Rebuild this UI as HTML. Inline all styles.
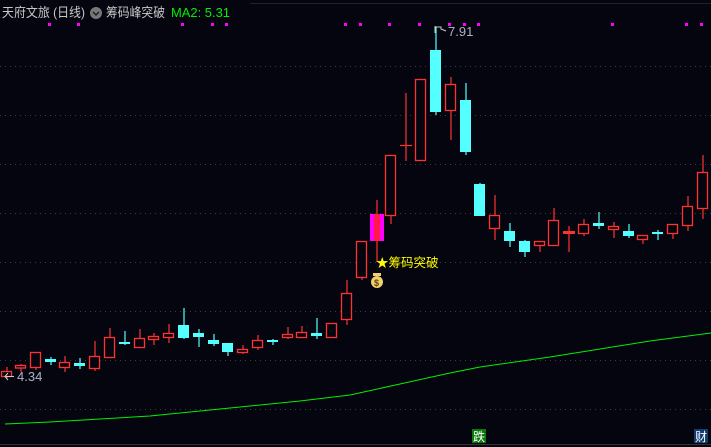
<!DOCTYPE html>
<html><head><meta charset="utf-8"><style>
html,body{margin:0;padding:0;background:#05050f;width:711px;height:447px;overflow:hidden}
svg{display:block}
text{font-family:"Liberation Sans","Noto Sans CJK SC",sans-serif}
</style></head><body>
<svg width="711" height="447" viewBox="0 0 711 447" xmlns="http://www.w3.org/2000/svg">
<rect width="711" height="447" fill="#05050f"/>
<g stroke="#3c3c3c" stroke-dasharray="1 4" stroke-width="1">
<line x1="0" y1="66.5" x2="711" y2="66.5"/><line x1="0" y1="115.5" x2="711" y2="115.5"/>
<line x1="0" y1="164.5" x2="711" y2="164.5"/><line x1="0" y1="213.5" x2="711" y2="213.5"/>
<line x1="0" y1="262.5" x2="711" y2="262.5"/><line x1="0" y1="311.5" x2="711" y2="311.5"/>
<line x1="0" y1="360.5" x2="711" y2="360.5"/><line x1="0" y1="409.5" x2="711" y2="409.5"/>
</g>
<line x1="250" y1="3.5" x2="711" y2="3.5" stroke="#222"/>
<line x1="0" y1="444.5" x2="711" y2="444.5" stroke="#333"/>
<g fill="#ff00ff">
<rect x="48" y="23" width="3" height="3"/><rect x="77" y="23" width="3" height="3"/><rect x="181" y="23" width="3" height="3"/><rect x="211" y="23" width="3" height="3"/><rect x="225" y="23" width="3" height="3"/>
<rect x="344" y="23" width="3" height="3"/><rect x="359" y="23" width="3" height="3"/><rect x="388" y="23" width="3" height="3"/><rect x="418" y="23" width="3" height="3"/><rect x="448" y="23" width="3" height="3"/><rect x="463" y="23" width="3" height="3"/><rect x="477" y="23" width="3" height="3"/>
<rect x="611" y="23" width="3" height="3"/><rect x="685" y="23" width="3" height="3"/><rect x="700" y="23" width="3" height="3"/>
</g>
<polyline fill="none" stroke="#00f000" stroke-width="1" points="5,424 50,422 100,419 150,416 200,411 250,406 300,401 350,395 400,384 450,373 480,367 550,357 600,349 650,341 711,333"/>
<g stroke-width="1.2">
<g stroke="#ff3232">
<line x1="7" y1="367" x2="7" y2="378"/><line x1="21" y1="364" x2="21" y2="372"/><line x1="36" y1="352" x2="36" y2="370"/>
<line x1="65" y1="356" x2="65" y2="372"/><line x1="95" y1="341" x2="95" y2="371"/><line x1="110" y1="328" x2="110" y2="357"/>
<line x1="140" y1="329" x2="140" y2="348"/><line x1="154" y1="333" x2="154" y2="345"/><line x1="169" y1="324" x2="169" y2="343"/>
<line x1="243" y1="345" x2="243" y2="354"/><line x1="258" y1="335" x2="258" y2="350"/><line x1="288" y1="327" x2="288" y2="339"/>
<line x1="302" y1="326" x2="302" y2="338"/><line x1="347" y1="280" x2="347" y2="325"/><line x1="362" y1="241" x2="362" y2="280"/>
<line x1="377" y1="200" x2="377" y2="262"/><line x1="391" y1="155" x2="391" y2="224"/><line x1="406" y1="93" x2="406" y2="161"/>
<line x1="451" y1="77" x2="451" y2="140"/><line x1="495" y1="195" x2="495" y2="240"/><line x1="540" y1="241" x2="540" y2="252"/>
<line x1="554" y1="208" x2="554" y2="246"/><line x1="569" y1="226" x2="569" y2="252"/><line x1="584" y1="219" x2="584" y2="236"/>
<line x1="614" y1="222" x2="614" y2="238"/><line x1="643" y1="235" x2="643" y2="244"/><line x1="673" y1="224" x2="673" y2="239"/>
<line x1="688" y1="196" x2="688" y2="231"/><line x1="703" y1="155" x2="703" y2="219"/>
<line x1="400" y1="145.5" x2="412" y2="145.5"/>
</g>
<g stroke="#54ffff">
<line x1="51" y1="357" x2="51" y2="365"/><line x1="80" y1="358" x2="80" y2="369"/><line x1="125" y1="331" x2="125" y2="345"/>
<line x1="184" y1="308" x2="184" y2="339"/><line x1="199" y1="329" x2="199" y2="347"/><line x1="214" y1="334" x2="214" y2="346"/>
<line x1="228" y1="343" x2="228" y2="356"/><line x1="273" y1="339" x2="273" y2="345"/><line x1="317" y1="318" x2="317" y2="339"/>
<line x1="436" y1="27" x2="436" y2="115"/><line x1="466" y1="83" x2="466" y2="155"/><line x1="480" y1="183" x2="480" y2="216"/>
<line x1="510" y1="223" x2="510" y2="247"/><line x1="525" y1="240" x2="525" y2="257"/><line x1="599" y1="212" x2="599" y2="229"/>
<line x1="629" y1="224" x2="629" y2="238"/><line x1="658" y1="230" x2="658" y2="240"/>
</g>
</g>
<g fill="#05050f" stroke="#ff3232" stroke-width="1.3">
<rect x="1.5" y="371.5" width="10" height="5"/><rect x="15.5" y="365.5" width="10" height="2.5"/><rect x="30.5" y="352.5" width="10" height="15"/>
<rect x="59.5" y="362.5" width="10" height="5"/><rect x="89.5" y="356.5" width="10" height="12"/><rect x="104.5" y="337.5" width="10" height="20"/>
<rect x="134.5" y="338.5" width="10" height="9"/><rect x="148.5" y="336.5" width="10" height="3"/><rect x="163.5" y="333.5" width="10" height="4"/>
<rect x="237.5" y="349.5" width="10" height="3"/><rect x="252.5" y="340.5" width="10" height="7"/><rect x="282.5" y="334.5" width="10" height="3"/>
<rect x="296.5" y="332.5" width="10" height="5"/><rect x="326.5" y="323.5" width="10" height="14"/><rect x="341.5" y="293.5" width="10" height="26"/>
<rect x="356.5" y="241.5" width="10" height="36"/><rect x="385.5" y="155.5" width="10" height="60"/><rect x="415.5" y="79.5" width="10" height="81"/>
<rect x="445.5" y="84.5" width="10" height="26"/><rect x="489.5" y="215.5" width="10" height="13"/><rect x="534.5" y="241.5" width="10" height="4"/>
<rect x="548.5" y="220.5" width="10" height="25"/><rect x="578.5" y="224.5" width="10" height="9"/><rect x="608.5" y="226.5" width="10" height="3"/>
<rect x="637.5" y="235.5" width="10" height="4"/><rect x="667.5" y="224.5" width="10" height="9"/><rect x="682.5" y="206.5" width="10" height="19"/>
<rect x="697.5" y="172.5" width="10" height="36"/>
</g>
<rect x="563" y="231" width="12" height="3" fill="#ff3232"/>
<g fill="#54ffff">
<rect x="45" y="359" width="11" height="3"/><rect x="74" y="363" width="11" height="3"/><rect x="119" y="342" width="11" height="2"/>
<rect x="178" y="325" width="11" height="13"/><rect x="193" y="333" width="11" height="4"/><rect x="208" y="340" width="11" height="4"/>
<rect x="222" y="343" width="11" height="9"/><rect x="267" y="340" width="11" height="2"/><rect x="311" y="333" width="11" height="3"/>
<rect x="430" y="50" width="11" height="62"/><rect x="460" y="100" width="11" height="52"/><rect x="474" y="184" width="11" height="32"/>
<rect x="504" y="231" width="11" height="10"/><rect x="519" y="241" width="11" height="11"/><rect x="593" y="223" width="11" height="3"/>
<rect x="623" y="231" width="11" height="5"/><rect x="652" y="232" width="11" height="2"/>
</g>
<rect x="370" y="214" width="14" height="27" fill="#ff00ff"/>
<rect x="374" y="214" width="6" height="27" fill="#ff1a4a"/>
<text x="2" y="17" font-size="13" fill="#c8c8c8" textLength="83" lengthAdjust="spacingAndGlyphs">天府文旅 (日线)</text>
<circle cx="96" cy="13" r="6" fill="#777"/>
<path d="M93 12 L96 15 L99 12" stroke="#222" stroke-width="1.5" fill="none"/>
<text x="106" y="17" font-size="13" fill="#c8c8c8" textLength="59" lengthAdjust="spacingAndGlyphs">筹码峰突破</text>
<text x="171" y="17" font-size="13" fill="#00ee00" textLength="59" lengthAdjust="spacingAndGlyphs">MA2: 5.31</text>
<path d="M435 26 L435 33 M435 27 L441 27 L441 29 L446 31" stroke="#ccc" stroke-width="1" fill="none"/>
<text x="448" y="36" font-size="13" fill="#aab4c8">7.91</text>
<path d="M14 376.5 L5 376.5 M8 373 L5 376.5 L8 380" stroke="#ccc" stroke-width="1" fill="none"/>
<text x="17" y="381" font-size="13" fill="#aab4c8">4.34</text>
<text x="376" y="267" font-size="12.5" fill="#ffff00">★筹码突破</text>
<circle cx="377" cy="282" r="6" fill="#f0d070"/>
<rect x="373" y="273" width="8" height="3" fill="#f0d070"/>
<text x="374" y="286" font-size="9" fill="#604000" font-weight="bold">$</text>
<rect x="472" y="429" width="14" height="14" fill="#0a7a0a"/>
<text x="473" y="441" font-size="12" fill="#fff">跌</text>
<rect x="694" y="429" width="14" height="14" fill="#123c6e"/>
<text x="695" y="441" font-size="12" fill="#fff">财</text>
</svg>
</body></html>
